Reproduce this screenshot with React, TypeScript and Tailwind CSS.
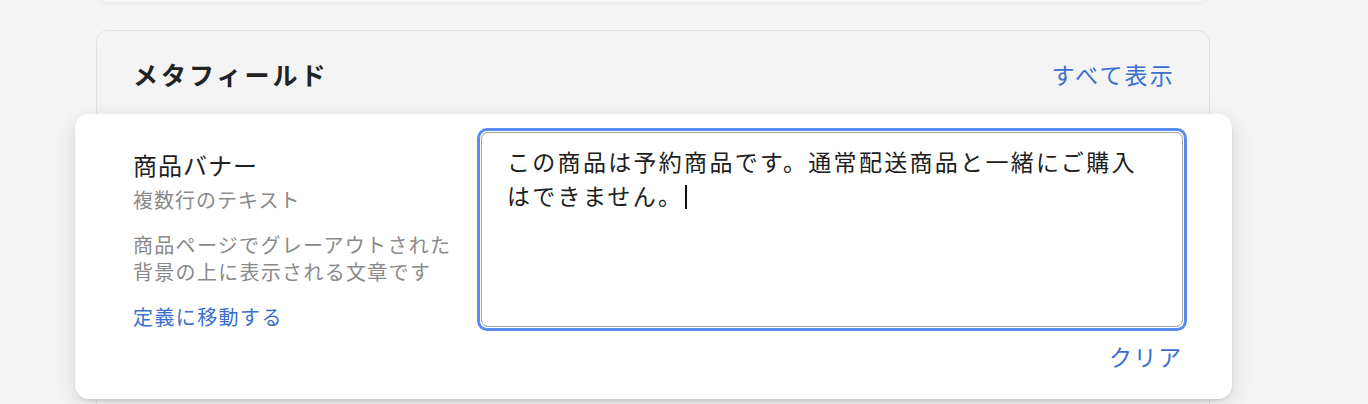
const jp = "font-['Noto_Sans_CJK_JP','Noto_Sans',sans-serif]";

export default function App() {
  return (
    <div className={`h-[404px] overflow-hidden bg-[#f5f5f5] ${jp}`}>
      {/* bottom edge of the card above */}
      <div className="ml-[96px] w-[1114px] -mt-[40px] h-[42px] rounded-b-[12px] bg-[#f7f7f7] shadow-[0_1px_6px_rgba(0,0,0,0.06)]" />

      {/* Metafields card */}
      <div className="ml-[96px] w-[1114px] mt-[28px] h-[400px] rounded-t-[12px] border border-[#e2e2e2] bg-[#f4f4f4]">
        <div className="flex h-[83px] items-center justify-between pl-[36px] pr-[34px] pt-[4px]">
          <h2 className="text-[25px] font-bold tracking-[3px] text-[#202223]">メタフィールド</h2>
          <button className="text-[23px] tracking-[2.2px] text-[#3a6fcf]">すべて表示</button>
        </div>

        {/* Focused metafield row */}
        <div className="-ml-[22px] w-[1157px] flex rounded-[14px] bg-white pl-[58px] pr-[45px] pt-[14px] pb-[28px] shadow-[0_6px_24px_rgba(0,0,0,0.13),0_2px_3px_rgba(0,0,0,0.08)]">
          <div className="w-[344px] shrink-0 pt-[22px]">
            <div className="text-[24px] leading-[30px] tracking-[1px] text-[#1f1f1f]">商品バナー</div>
            <div className="mt-[6px] text-[20px] leading-[28px] tracking-[1px] text-[#8a8a8a]">複数行のテキスト</div>
            <p className="mt-[17px] text-[20px] leading-[27px] tracking-[1.3px] text-[#8a8a8a]">
              商品ページでグレーアウトされた
              <br />
              背景の上に表示される文章です
            </p>
            <a className="mt-[18px] block text-[20px] leading-[28px] tracking-[1.4px] text-[#3a6fcf]">定義に移動する</a>
          </div>

          <div className="flex flex-1 flex-col">
            <div className="rounded-[10px] border-[3px] border-[#5a8cf0] p-px">
              <div className="h-[195px] rounded-[7px] border border-[#a3a3a3] px-[25px] pt-[11px] text-[23px] leading-[34px] tracking-[2.3px] text-[#202020]">
                この商品は予約商品です。通常配送商品と一緒にご購入
                <br />
                はできません。
                <span className="ml-[2px] inline-block h-[24px] w-[2px] translate-y-[4px] bg-[#111]" />
              </div>
            </div>
            <div className="flex justify-end pt-[10px]">
              <button className="mr-[4px] text-[23px] leading-[30px] tracking-[1.7px] text-[#3a6fcf]">クリア</button>
            </div>
          </div>
        </div>
      </div>
    </div>
  );
}
